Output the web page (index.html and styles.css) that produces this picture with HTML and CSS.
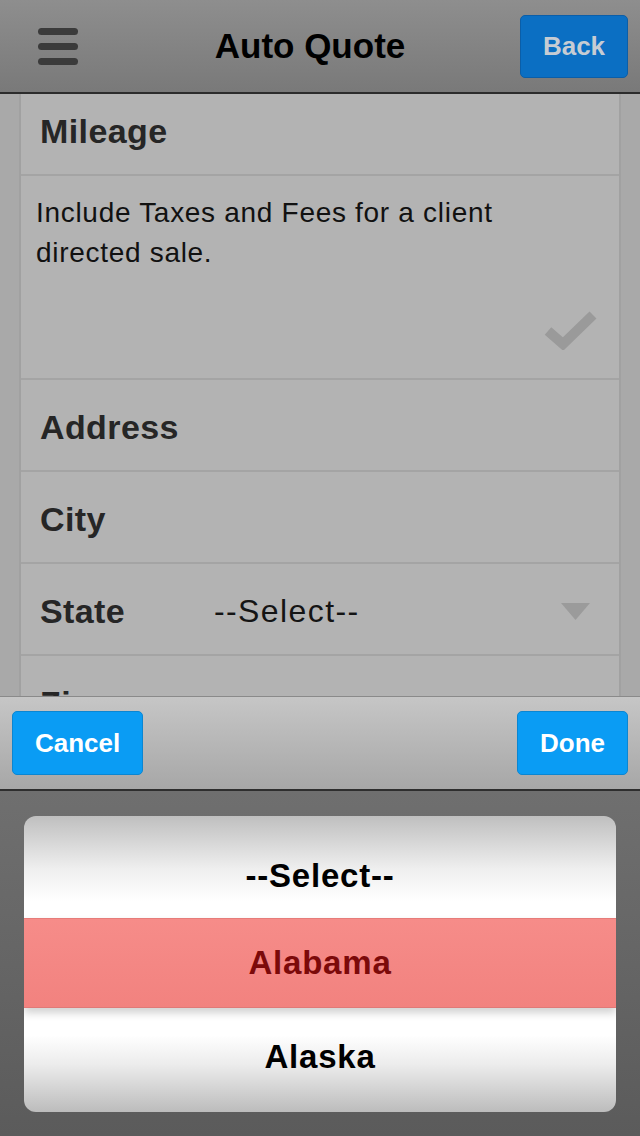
FILE: index.html
```html
<!DOCTYPE html>
<html>
<head>
    <title>Auto Quote</title>
    <link rel="stylesheet" href="styles.css">
</head>
<body>
    <div id="app">
        <div id="topbar">
            <button class="menu-button" aria-label="Menu">
                <span class="menu-bar"></span>
                <span class="menu-bar"></span>
                <span class="menu-bar"></span>
            </button>
            <div id="title">Auto Quote</div>
            <button class="nav-button">Back</button>
        </div>

        <div id="content">
            <div id="form-list">
                <div class="row"><span class="label">Mileage</span></div>
                <div class="row row-note">
                    <p class="note">Include Taxes and Fees for a client directed sale.</p>
                    <svg class="check" width="56" height="42" viewBox="0 0 56 42">
                        <path d="M5 23 L20 36 L50 7" fill="none" stroke="#9a9a9a" stroke-width="10"/>
                    </svg>
                </div>
                <div class="row"><span class="label">Address</span></div>
                <div class="row"><span class="label">City</span></div>
                <div class="row">
                    <span class="label label-fixed">State</span>
                    <span class="select-value">--Select--</span>
                    <svg class="select-arrow" width="30" height="18" viewBox="0 0 30 18">
                        <path d="M0 0 H29 L14.5 17 Z" fill="#9b9b9b"/>
                    </svg>
                </div>
                <div class="row"><span class="label">Zip</span></div>
            </div>
        </div>

        <div id="toolbar">
            <button class="tool-button">Cancel</button>
            <button class="tool-button">Done</button>
        </div>

        <div id="picker-area">
            <div id="picker">
                <div class="option option-first">--Select--</div>
                <div class="option option-selected">Alabama</div>
                <div class="option option-last">Alaska</div>
            </div>
        </div>
    </div>
</body>
</html>
```

FILE: styles.css
```css
body {
    margin: 0;
    padding: 0;
    font-family: "Liberation Sans", Helvetica, Arial, sans-serif;
    background-color: #5e5e5e;
}
#app {
    width: 640px;
    height: 1136px;
    display: flex;
    flex-direction: column;
    overflow: hidden;
}

/* Top navigation bar */
#topbar {
    height: 92px;
    flex-shrink: 0;
    display: flex;
    align-items: center;
    padding: 0 12px 0 38px;
    background: linear-gradient(#8e8e8e, #797979);
    border-bottom: 2px solid #2c2c2c;
}
.menu-button {
    width: 40px;
    padding: 0;
    border: none;
    background: none;
    display: flex;
    flex-direction: column;
    gap: 8px;
}
.menu-bar {
    display: block;
    height: 7px;
    border-radius: 4px;
    background-color: #3b3b3b;
}
#title {
    flex: 1;
    padding-left: 22px;
    text-align: center;
    font-size: 35px;
    font-weight: bold;
    color: #000000;
}
.nav-button {
    width: 108px;
    height: 63px;
    border: 1px solid #0b5ea8;
    border-radius: 5px;
    background-color: #0b6fc3;
    color: #c6ccd3;
    font-family: inherit;
    font-size: 26px;
    font-weight: bold;
}

/* Scrolling form */
#content {
    flex: 1;
    overflow: hidden;
    padding: 0 19px;
    background-color: #a9a9a9;
}
#form-list {
    margin-top: -10px; /* list is scrolled a little */
    background-color: #b3b3b3;
    border-left: 2px solid #a1a1a1;
    border-right: 2px solid #a1a1a1;
}
.row {
    height: 92px;
    box-sizing: border-box;
    display: flex;
    align-items: center;
    padding: 4px 28px 0 19px;
    border-bottom: 2px solid #a4a4a4;
}
.label {
    font-size: 34px;
    font-weight: bold;
    letter-spacing: 0.4px;
    color: #262626;
}
.label-fixed {
    width: 174px;
    flex-shrink: 0;
}
.select-value {
    flex: 1;
    font-size: 32px;
    letter-spacing: 1.4px;
    color: #141414;
}
.select-arrow {
    margin-top: 2px;
}
.row-note {
    height: 204px;
    flex-direction: column;
    align-items: stretch;
    justify-content: space-between;
    padding: 17px 20px 28px 15px;
}
.note {
    margin: 0;
    font-size: 28px;
    line-height: 40px;
    letter-spacing: 0.7px;
    color: #111111;
}
.check {
    align-self: flex-end;
}

/* Picker toolbar */
#toolbar {
    height: 92px;
    flex-shrink: 0;
    display: flex;
    justify-content: space-between;
    align-items: center;
    padding: 0 12px;
    background: linear-gradient(#c6c6c6, #a7a7a7);
    border-top: 1px solid #8a8a8a;
    border-bottom: 2px solid #2e2e2e;
}
.tool-button {
    height: 64px;
    padding: 0 22px;
    border: 1px solid #0a86d2;
    border-radius: 5px;
    background-color: #0a9cf4;
    color: #ffffff;
    font-family: inherit;
    font-size: 26px;
    font-weight: bold;
}

/* Picker wheel */
#picker-area {
    height: 345px;
    flex-shrink: 0;
    box-sizing: border-box;
    padding: 25px 24px 24px;
    background: linear-gradient(#6f6f6f, #5b5b5b);
}
#picker {
    height: 296px;
    border-radius: 12px;
    overflow: hidden;
    display: flex;
    flex-direction: column;
    background: linear-gradient(#bfbfbf 0%, #efefef 18%, #ffffff 29%, #ffffff 74%, #ececec 84%, #bcbcbc 100%);
}
.option {
    display: flex;
    justify-content: center;
    align-items: center;
    font-size: 33px;
    font-weight: bold;
    letter-spacing: 0.8px;
    color: #000000;
}
.option-first {
    height: 84px;
    padding-top: 18px;
}
.option-selected {
    height: 88px;
    position: relative;
    background: linear-gradient(#f68c89, #f2827f);
    border-top: 1px solid #e67c7a;
    border-bottom: 1px solid #e07977;
    box-shadow: 0 5px 8px rgba(0, 0, 0, 0.18);
    color: #7c0a0a;
}
.option-last {
    flex: 1;
    padding-bottom: 6px;
}
```
